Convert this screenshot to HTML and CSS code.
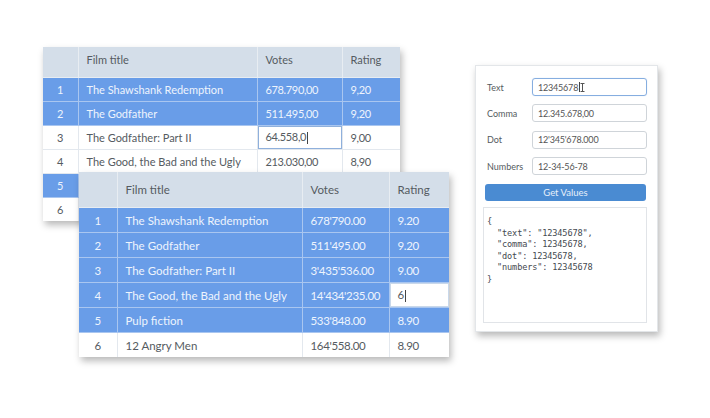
FILE: index.html
```html
<!DOCTYPE html>
<html>
<head>
<meta charset="utf-8">
<link rel="stylesheet" href="styles.css">
</head>
<body>
<div class="canvas">
  <div class="win grid1">
    <table class="dt dt1">
      <colgroup><col class="c-idx"><col class="c-title"><col class="c-votes"><col class="c-rate"></colgroup>
      <thead><tr><th></th><th>Film title</th><th>Votes</th><th>Rating</th></tr></thead>
      <tbody>
        <tr class="sel"><td class="idx">1</td><td>The Shawshank Redemption</td><td class="num">678.790,00</td><td class="num">9,20</td></tr>
        <tr class="sel"><td class="idx">2</td><td>The Godfather</td><td class="num">511.495,00</td><td class="num">9,20</td></tr>
        <tr><td class="idx">3</td><td>The Godfather: Part II</td><td class="num edit">64.558,0<span class="caret"></span></td><td class="num">9,00</td></tr>
        <tr><td class="idx">4</td><td>The Good, the Bad and the Ugly</td><td class="num">213.030,00</td><td class="num">8,90</td></tr>
        <tr class="sel"><td class="idx">5</td><td>Pulp fiction</td><td class="num">533.848,00</td><td class="num">8,90</td></tr>
        <tr><td class="idx">6</td><td>12 Angry Men</td><td class="num">164.558,00</td><td class="num">8,90</td></tr>
      </tbody>
    </table>
  </div>

  <div class="win grid2">
    <table class="dt dt2">
      <colgroup><col class="c-idx"><col class="c-title"><col class="c-votes"><col class="c-rate"></colgroup>
      <thead><tr><th></th><th>Film title</th><th>Votes</th><th>Rating</th></tr></thead>
      <tbody>
        <tr class="sel"><td class="idx">1</td><td>The Shawshank Redemption</td><td class="num">678'790.00</td><td class="num">9.20</td></tr>
        <tr class="sel"><td class="idx">2</td><td>The Godfather</td><td class="num">511'495.00</td><td class="num">9.20</td></tr>
        <tr class="sel"><td class="idx">3</td><td>The Godfather: Part II</td><td class="num">3'435'536.00</td><td class="num">9.00</td></tr>
        <tr class="sel"><td class="idx">4</td><td>The Good, the Bad and the Ugly</td><td class="num">14'434'235.00</td><td class="num edit">6<span class="caret"></span></td></tr>
        <tr class="sel"><td class="idx">5</td><td>Pulp fiction</td><td class="num">533'848.00</td><td class="num">8.90</td></tr>
        <tr><td class="idx">6</td><td>12 Angry Men</td><td class="num">164'558.00</td><td class="num">8.90</td></tr>
      </tbody>
    </table>
  </div>

  <div class="win form">
    <div class="frow"><span class="lbl">Text</span><div class="inp focus">12345678<span class="caret"></span><svg class="ibeam" width="5" height="9" viewBox="0 0 5 9"><path d="M0.5 0.5h4M2.5 0.5v8M0.5 8.5h4" stroke="#555" stroke-width="1" fill="none"/></svg></div></div>
    <div class="frow"><span class="lbl">Comma</span><div class="inp">12.345.678,00</div></div>
    <div class="frow"><span class="lbl">Dot</span><div class="inp">12'345'678.000</div></div>
    <div class="frow"><span class="lbl">Numbers</span><div class="inp">12-34-56-78</div></div>
    <button class="btn">Get Values</button>
    <pre class="out">{
  "text": "12345678",
  "comma": 12345678,
  "dot": 12345678,
  "numbers": 12345678
}</pre>
  </div>
</div>
</body>
</html>
```

FILE: styles.css
```css
html, body {
  margin: 0;
  padding: 0;
  background: #ffffff;
}
.canvas {
  position: relative;
  width: 710px;
  height: 418px;
  overflow: hidden;
  font-family: Lato, "Open Sans", sans-serif;
  color: #555b61;
}
.win {
  position: absolute;
  background: #fff;
  box-shadow: 2px 4px 7px rgba(0, 0, 0, 0.28);
}
.grid1 { left: 43px; top: 47px; width: 357px; }
.grid2 { left: 79px; top: 172px; width: 370px; }
.form {
  left: 475px;
  top: 65px;
  width: 183px;
  height: 267px;
  box-sizing: border-box;
  border: 1px solid #e3e6e9;
  padding: 12px 10px 8px 9px;
  display: flex;
  flex-direction: column;
}

.dt {
  border-collapse: collapse;
  table-layout: fixed;
  width: 100%;
}
.dt th, .dt td {
  border: 1px solid #e3e8ee;
  padding: 0 0 0 8px;
  text-align: left;
  font-weight: normal;
  white-space: nowrap;
  overflow: hidden;
}
.dt th { background: #d4dee9; border-color: #e8edf2; }
.dt tr > *:first-child { border-left: none; }
.dt tr > *:last-child { border-right: none; }
.dt thead th { border-top: none; }
.dt tbody tr:last-child td { border-bottom: none; }
.dt td.idx { text-align: center; padding: 0; }
.dt td.num { letter-spacing: -0.35px; }
.dt tr.sel td { background: #699de8; color: #eef4fd; border-color: #a9c6f0; }
.dt td.edit { background: #fff; box-shadow: inset 0 0 0 1px #8fb0dc; }
.dt tr.sel td.edit { background: #fff; color: #555b61; box-shadow: inset 0 0 0 1px #c9d8ea; }

.dt1 { font-size: 11px; }
.dt1 .c-idx { width: 35px; }
.dt1 .c-title { width: 179px; }
.dt1 .c-votes { width: 85px; }
.dt1 .c-rate { width: 58px; }
.dt1 thead th { height: 30px; padding-bottom: 4px; box-sizing: border-box; }
.dt1 td { height: 23px; }

.dt2 { font-size: 11.5px; }
.dt2 .c-idx { width: 38px; }
.dt2 .c-title { width: 185px; }
.dt2 .c-votes { width: 87px; }
.dt2 .c-rate { width: 60px; }
.dt2 thead th { height: 35px; }
.dt2 td { height: 24px; }

.caret {
  display: inline-block;
  width: 1px;
  height: 12px;
  background: #444;
  vertical-align: middle;
  margin-left: 1px;
}

.frow {
  display: flex;
  align-items: center;
  height: 18px;
  margin-bottom: 8.4px;
  font-size: 9px;
}
.lbl { width: 45px; flex: none; padding-left: 2px; }
.inp {
  flex: 1;
  height: 18px;
  box-sizing: border-box;
  border: 1px solid #cfd4d9;
  border-radius: 3px;
  padding: 0 5px;
  display: flex;
  align-items: center;
  font-size: 9px;
  letter-spacing: -0.2px;
  color: #555;
}
.inp .caret { height: 10px; }
.inp.focus { border-color: #86aee0; box-shadow: 0 0 1px #b9d0ee; }
.btn {
  margin-top: 0;
  height: 18px;
  border: none;
  border-radius: 3px;
  background: #4a8bd2;
  color: #e6effa;
  font-family: Lato, "Open Sans", sans-serif;
  font-size: 9.5px;
  padding: 0;
  width: 161px;
}
.out {
  margin: 6px 0 0 -2px;
  width: 164px;
  height: 116px;
  box-sizing: border-box;
  border: 1px solid #e1e4e8;
  padding: 8px 3px;
  font-family: "DejaVu Sans Mono", monospace;
  font-size: 8.6px;
  letter-spacing: -0.15px;
  line-height: 11.4px;
  color: #44494f;
}
```
